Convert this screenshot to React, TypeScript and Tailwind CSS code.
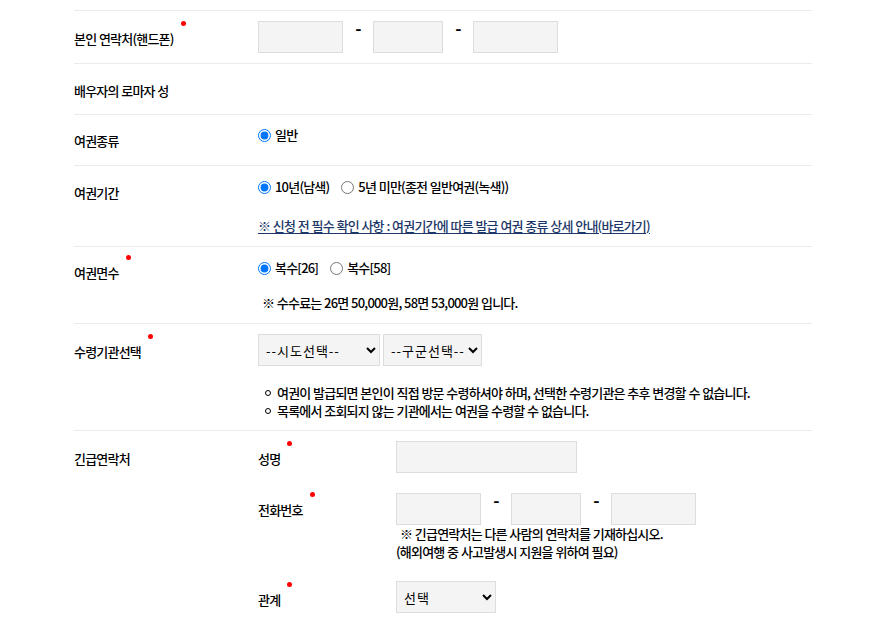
import React from "react";

const font = { fontFamily: '"Noto Sans CJK KR", "Noto Sans", sans-serif' };

function Req({ children }: { children: React.ReactNode }) {
  return (
    <span className="relative inline-block">
      {children}
      <span className="absolute left-[calc(100%+7px)] top-[-9px] w-[5px] h-[5px] rounded-full bg-[#ff0000]" />
    </span>
  );
}

function Dash() {
  return (
    <span className="w-[30px] self-start text-center text-[17px] font-bold leading-[13px] text-black">-</span>
  );
}

function Box({ w }: { w: string }) {
  return <input type="text" className={`${w} h-[32px] bg-[#f4f4f4] border border-[#dddddd] outline-none`} />;
}

function Phone() {
  return (
    <div className="flex items-start">
      <Box w="w-[85px]" />
      <Dash />
      <Box w="w-[70px]" />
      <Dash />
      <Box w="w-[85px]" />
    </div>
  );
}

function Radio({ name, label, checked }: { name: string; label: string; checked?: boolean }) {
  return (
    <label className="inline-flex items-center mr-[12px]">
      <input type="radio" name={name} defaultChecked={checked} className="w-[13px] h-[13px] m-0 mr-[4px]" />
      <span>{label}</span>
    </label>
  );
}

export default function App() {
  return (
    <div
      className="w-[884px] h-[620px] overflow-hidden bg-white text-[13px] leading-[18px] text-[#000] font-medium tracking-[-0.8px] [word-spacing:0.5px]"
      style={font}
    >
      <div className="ml-[74px] w-[738px] pt-[10px]">
        {/* Row 1 */}
        <div className="flex border-t border-[#ebebeb]">
          <div className="w-[184px] pt-[19px]">
            <Req>본인 연락처(핸드폰)</Req>
          </div>
          <div className="py-[10px]">
            <Phone />
          </div>
        </div>

        {/* Row 2 */}
        <div className="flex border-t border-[#ebebeb] h-[51px]">
          <div className="w-[184px] pt-[18px]">배우자의 로마자 성</div>
        </div>

        {/* Row 3 */}
        <div className="flex border-t border-[#ebebeb] h-[51px]">
          <div className="w-[184px] pt-[17px]">여권종류</div>
          <div className="pt-[11px]">
            <Radio name="type" label="일반" checked />
          </div>
        </div>

        {/* Row 4 */}
        <div className="flex border-t border-[#ebebeb]">
          <div className="w-[184px] pt-[18px]">여권기간</div>
          <div className="pt-[12px] pb-[11px]">
            <div className="flex">
              <Radio name="period" label="10년(남색)" checked />
              <Radio name="period" label="5년 미만(종전 일반여권(녹색))" />
            </div>
            <a href="#" className="block mt-[21px] text-[#1d3768] underline underline-offset-2">
              ※ 신청 전 필수 확인 사항 : 여권기간에 따른 발급 여권 종류 상세 안내(바로가기)
            </a>
          </div>
        </div>

        {/* Row 5 */}
        <div className="flex border-t border-[#ebebeb]">
          <div className="w-[184px] pt-[17px]">
            <Req>여권면수</Req>
          </div>
          <div className="pt-[12px] pb-[11px]">
            <div className="flex">
              <Radio name="pages" label="복수[26]" checked />
              <Radio name="pages" label="복수[58]" />
            </div>
            <p className="mt-[17px] pl-[4px]">※ 수수료는 26면 50,000원, 58면 53,000원 입니다.</p>
          </div>
        </div>

        {/* Row 6 */}
        <div className="flex border-t border-[#ebebeb]">
          <div className="w-[184px] pt-[19px]">
            <Req>수령기관선택</Req>
          </div>
          <div className="pt-[10px] pb-[10px]">
            <div className="flex gap-[3px]">
              <select className="w-[122px] h-[32px] bg-[#f4f4f4] border border-[#dddddd] pl-[3px] tracking-[1px] text-[13px] font-normal">
                <option>--시도선택--</option>
              </select>
              <select className="w-[99px] h-[32px] bg-[#f4f4f4] border border-[#dddddd] pl-[3px] tracking-[1px] text-[13px] font-normal">
                <option>--구군선택--</option>
              </select>
            </div>
            <ul className="mt-[18px] ml-[7px]">
              <li className="flex items-center">
                <span className="w-[6px] h-[6px] rounded-full border-[1.5px] border-black mr-[6px]" />
                여권이 발급되면 본인이 직접 방문 수령하셔야 하며, 선택한 수령기관은 추후 변경할 수 없습니다.
              </li>
              <li className="flex items-center">
                <span className="w-[6px] h-[6px] rounded-full border-[1.5px] border-black mr-[6px]" />
                목록에서 조회되지 않는 기관에서는 여권을 수령할 수 없습니다.
              </li>
            </ul>
          </div>
        </div>

        {/* Row 7 */}
        <div className="flex border-t border-[#ebebeb]">
          <div className="w-[184px] pt-[19px]">긴급연락처</div>
          <div className="pt-[10px] flex flex-col gap-[20px]">
            <div className="flex">
              <div className="w-[138px] pt-[9px]">
                <Req>성명</Req>
              </div>
              <Box w="w-[181px]" />
            </div>
            <div className="flex">
              <div className="w-[138px] pt-[8px]">
                <Req>전화번호</Req>
              </div>
              <div>
                <Phone />
                <p className="pl-[4px]">※ 긴급연락처는 다른 사람의 연락처를 기재하십시오.</p>
                <p>(해외여행 중 사고발생시 지원을 위하여 필요)</p>
              </div>
            </div>
            <div className="flex">
              <div className="w-[138px] pt-[10px]">
                <Req>관계</Req>
              </div>
              <select className="w-[100px] h-[32px] bg-[#f4f4f4] border border-[#dddddd] pl-[3px] tracking-[1px] text-[13px] font-normal">
                <option>선택</option>
              </select>
            </div>
          </div>
        </div>
      </div>
    </div>
  );
}
